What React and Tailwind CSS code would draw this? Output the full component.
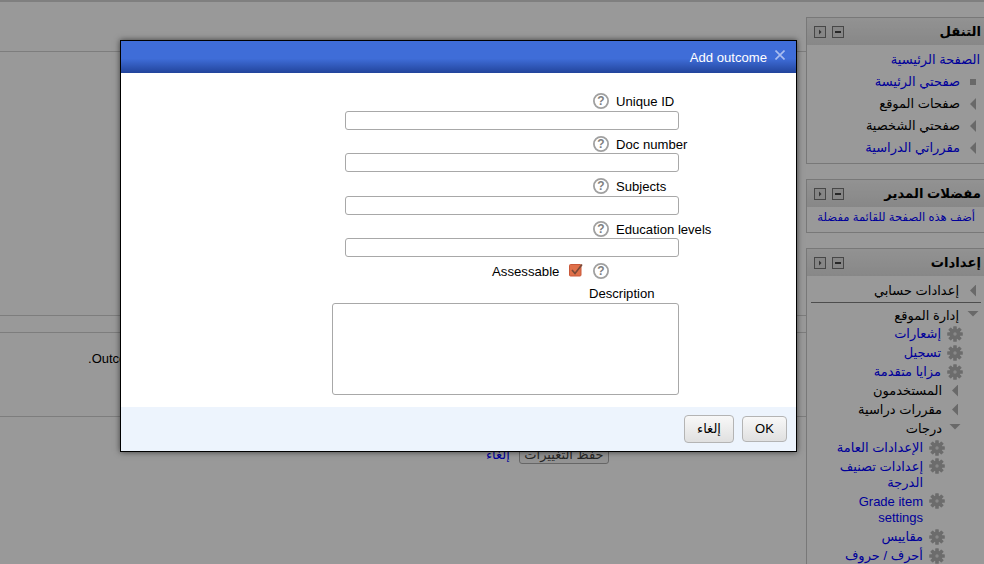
import React from "react";

const FONT = "font-['Liberation_Sans','DejaVu_Sans',sans-serif]";

function HelpIcon() {
  return (
    <svg width="16" height="16" viewBox="0 0 16 16" className="shrink-0">
      <circle cx="8" cy="8" r="7.1" fill="#fff" stroke="#a0a0a0" strokeWidth="1.8" />
      <text x="8" y="12.2" textAnchor="middle" fontSize="12" fontWeight="700" fontFamily="Liberation Sans" fill="#808080">?</text>
    </svg>
  );
}

function Cog() {
  return (
    <svg width="16" height="16" viewBox="0 0 16 16" className="shrink-0">
      {[0, 45, 90, 135].map((a) => (
        <rect key={a} x="6.2" y="0.2" width="3.6" height="15.6" rx="0.6" fill="#b4b4b4" transform={`rotate(${a} 8 8)`} />
      ))}
      <circle cx="8" cy="8" r="5.4" fill="#b4b4b4" />
      <circle cx="8" cy="8" r="1.7" fill="#e4e4e4" />
    </svg>
  );
}

function Field({ label, inputClass, labelClass }) {
  return (
    <>
      <div className={`flex items-center gap-[7px] pl-[472px] h-4 ${labelClass}`}>
        <HelpIcon />
        <span className="text-[13.1px] leading-4 text-black mt-[1px]">{label}</span>
      </div>
      <input className={`ml-[224px] block w-[334px] h-[19px] rounded-[3px] border border-[#a8a8a8] bg-white ${inputClass}`} />
    </>
  );
}

function BlockHead({ title }) {
  return (
    <div className="flex items-center justify-between h-[27px] pr-[3px] pl-[7px] bg-gradient-to-b from-[#f4f4f4] to-[#e2e2e2]">
      <span className="font-bold text-[13.2px] text-black">{title}</span>
      <span className="flex gap-[6px]" dir="ltr">
        <svg width="12" height="12" viewBox="0 0 12 12">
          <rect x="0.5" y="0.5" width="11" height="11" fill="#e0e0e0" stroke="#777" />
          <path d="M5 3.5 L7.5 6 L5 8.5 Z" fill="#555" />
        </svg>
        <svg width="12" height="12" viewBox="0 0 12 12">
          <rect x="0.5" y="0.5" width="11" height="11" fill="#e0e0e0" stroke="#777" />
          <rect x="3" y="5" width="6" height="2" fill="#444" />
        </svg>
      </span>
    </div>
  );
}

const TriLeft = () => (
  <span className="w-[6px] h-3 shrink-0 bg-[#b0b0b0] [clip-path:polygon(100%_0,100%_100%,0_50%)]" />
);
const TriDown = () => (
  <span className="w-3 h-[6px] mb-[4px] shrink-0 bg-[#b0b0b0] [clip-path:polygon(0_0,100%_0,50%_100%)]" />
);
const Dot = () => <span className="w-[6px] h-[6px] shrink-0 bg-[#b0b0b0]" />;

function NavRow({ icon, text, link }) {
  return (
    <div className="flex items-center gap-[10px] h-[22px] pr-[8px] text-[13px]">
      <span className="w-[6px] flex justify-center">{icon}</span>
      <span className={link ? "text-[#0000ff]" : "text-black"}>{text}</span>
    </div>
  );
}

function CogLink({ text }) {
  return (
    <div className="flex items-center gap-[6px] h-[19px] text-[13px] text-[#0000ff]">
      <Cog />
      <span>{text}</span>
    </div>
  );
}

function CogWrap({ text, className }) {
  return (
    <div className={`flex items-start gap-[6px] ${className}`}>
      <span className="-mt-[1px]"><Cog /></span>
      <span className="text-[13px] leading-4 text-[#0000ff] w-[88px]">{text}</span>
    </div>
  );
}

function TreeRow({ icon, text, indent, gap }) {
  return (
    <div className={`flex items-center h-[19px] text-[13px] text-black ${indent} ${gap}`}>
      {icon}
      <span>{text}</span>
    </div>
  );
}

export default function App() {
  return (
    <div className={`relative w-[984px] h-[564px] overflow-hidden bg-white ${FONT}`}>
      <div className="h-[2px] bg-[#d4d4d4]" />
      <div className="flex h-[562px]">
        <main className="w-[806px] shrink-0">
          <div className="h-[50px] border-b border-[#d0d0d0]" />
          <div className="h-[264px] border-b border-[#d0d0d0]" />
          <div className="h-[17px] border-b border-[#d0d0d0]" />
          <div className="h-[84px] border-b border-[#d0d0d0] pl-[88px] pt-[18px]">
            <p dir="rtl" className="w-fit text-[13px] leading-4 text-black">Outcomes.</p>
          </div>
          <div className="flex items-center gap-[9px] pl-[486px] mt-[28px]">
            <a className="text-[13px] text-[#0000ff]">إلغاء</a>
            <button className="w-[90px] h-[19px] rounded-[3px] border border-[#aaa] bg-[#f6f6f6] text-[13px] leading-4 text-[#444]">حفظ التغييرات</button>
          </div>
        </main>
        <aside dir="rtl" className="w-[178px] shrink-0 pt-[15px]">
          <section className="h-[147px] border border-r-0 border-[#c8c8c8]">
            <BlockHead title="التنقل" />
            <div className="pt-[4px]">
              <div className="h-[22px] pr-1 flex items-center text-[13px] text-[#0000ff]">الصفحة الرئيسية</div>
              <NavRow icon={<Dot />} text="صفحتي الرئيسة" link />
              <NavRow icon={<TriLeft />} text="صفحات الموقع" />
              <NavRow icon={<TriLeft />} text="صفحتي الشخصية" />
              <NavRow icon={<TriLeft />} text="مقرراتي الدراسية" link />
            </div>
          </section>
          <section className="mt-[15px] h-[54px] border border-r-0 border-[#c8c8c8]">
            <BlockHead title="مفضلات المدير" />
            <div className="pr-[9px] text-[11.6px] leading-5 text-[#0000ff]">أضف هذه الصفحة للقائمة مفضلة</div>
          </section>
          <section className="mt-[15px] h-[340px] border border-r-0 border-[#c8c8c8]">
            <BlockHead title="إعدادات" />
            <div className="mr-[3px] ml-[4px] mt-[3px] pb-[1px] border-b border-[#808080]">
              <div className="flex items-center gap-[11px] h-[22px] pr-[5px] pt-[1px] text-[13px] text-black">
                <TriLeft />
                <span>إعدادات حسابي</span>
              </div>
            </div>
            <div className="pt-[3px]">
              <TreeRow icon={<TriDown />} text="إدارة الموقع" indent="pr-[5px]" gap="gap-[8px]" />
              <div className="pr-[21px] -mt-[1px]">
                <CogLink text="إشعارات" />
                <CogLink text="تسجيل" />
                <CogLink text="مزايا متقدمة" />
                <TreeRow icon={<TriLeft />} text="المستخدمون" indent="pr-[5px]" gap="gap-[10px]" />
                <TreeRow icon={<TriLeft />} text="مقررات دراسية" indent="pr-[5px]" gap="gap-[10px]" />
                <TreeRow icon={<TriDown />} text="درجات" indent="pr-[2px]" gap="gap-[7px]" />
                <div className="pr-[18px]">
                  <CogLink text="الإعدادات العامة" />
                  <CogWrap text="إعدادات تصنيف الدرجة" className="mt-[2px]" />
                  <CogWrap text="Grade item settings" className="mt-[3px]" />
                  <div className="mt-[1px]"><CogLink text="مقاييس" /></div>
                  <CogLink text="أحرف / حروف" />
                </div>
              </div>
            </div>
          </section>
        </aside>
      </div>

      <div className="absolute inset-0 bg-black/40" />

      <div className="absolute left-[120px] top-[40px] w-[677px] h-[412px] border border-black bg-white flex flex-col shadow-[0_0_6px_rgba(0,0,0,0.6)]">
        <header className="h-[32px] shrink-0 flex items-center justify-end gap-[8px] pr-[11px] bg-[linear-gradient(#3f6dd8_0%,#3f6dd8_55%,#22449b_100%)]">
          <span className="text-[13.1px] text-white mt-[1px]">Add outcome</span>
          <svg width="10" height="10" viewBox="0 0 10 10" className="mb-[4px]">
            <path d="M0.5 0.5 L9.5 9.5 M9.5 0.5 L0.5 9.5" stroke="#a9bdf0" strokeWidth="1.6" />
          </svg>
        </header>
        <form className="flex-1 pt-[20px]">
          <Field label="Unique ID" inputClass="mt-[2px]" />
          <Field label="Doc number" labelClass="mt-[6px]" inputClass="mt-[1px]" />
          <Field label="Subjects" labelClass="mt-[6px]" inputClass="mt-[2px]" />
          <Field label="Education levels" labelClass="mt-[6px]" inputClass="mt-[1px]" />
          <div className="flex items-center h-4 mt-[6px] pl-[371px]">
            <span className="text-[13.2px] leading-4 text-black w-[77px] mt-[2px]">Assessable</span>
            <svg width="14" height="14" viewBox="0 0 14 14" className="mb-[3px] shrink-0">
              <rect x="0.5" y="1.5" width="11.5" height="11.5" rx="1" fill="#e0704a" stroke="#c9583a" />
              <path d="M3 7 L6 10.5 L13 1.5" fill="none" stroke="#7a4a38" strokeWidth="1.7" />
            </svg>
            <span className="ml-[10px]"><HelpIcon /></span>
          </div>
          <div className="pl-[468px] mt-[7px] text-[13.1px] leading-4 text-black">Description</div>
          <textarea className="ml-[211px] mt-[1px] block w-[347px] h-[92px] rounded-[3px] border border-[#a8a8a8] bg-white resize-none" />
        </form>
        <footer className="h-[44px] shrink-0 bg-[#edf4fd] flex items-center justify-end gap-2 pr-[9px]">
          <button className="w-[50px] h-[28px] rounded-[4px] border border-[#b4b4b4] bg-gradient-to-b from-[#f8f8f8] to-[#e0e0e0] text-[13px] text-black">إلغاء</button>
          <button className="w-[45px] h-[26px] rounded-[4px] border border-[#b4b4b4] bg-gradient-to-b from-[#f8f8f8] to-[#e0e0e0] text-[13px] text-black">OK</button>
        </footer>
      </div>
    </div>
  );
}
